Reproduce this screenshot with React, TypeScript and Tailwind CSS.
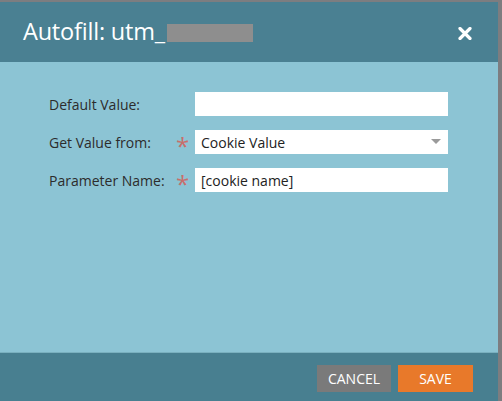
import React from 'react';

const fields = [
  { label: 'Default Value:', required: false, value: '', select: false },
  { label: 'Get Value from:', required: true, value: 'Cookie Value', select: true },
  { label: 'Parameter Name:', required: true, value: '[cookie name]', select: false },
];

export default function App() {
  return (
    <div
      className="w-[502px] h-[401px] bg-[#7d7d80] pt-[2px] pr-[4px] overflow-hidden"
      style={{ fontFamily: '"Open Sans", "Noto Sans", sans-serif' }}
    >
      <div className="flex flex-col h-full w-[498px]">
        {/* Header */}
        <div className="h-[60px] bg-[#4a8092] flex items-center justify-between pl-[23px] pr-[26px] shrink-0">
          <div className="flex items-center text-white text-[23.5px] leading-none">
            <span className="tracking-[-0.2px]">Autofill: utm_</span>
            <span className="w-[86px] h-[18px] bg-[#8e8e8e] ml-[2px] mt-[1px]"></span>
          </div>
          <svg width="14" height="13" viewBox="0 0 14 13" className="mt-[2px]">
            <path d="M2 1.5 L12 11.5 M12 1.5 L2 11.5" stroke="white" strokeWidth="3.2" strokeLinecap="round" />
          </svg>
        </div>

        {/* Body */}
        <div className="flex-1 bg-[#8cc4d4] pt-[30px] pl-[49px] flex flex-col gap-[14px]">
          {fields.map((f) => (
            <div key={f.label} className="flex items-center h-[24px]">
              <span className="w-[128px] text-[14px] text-[#2c2c2c]">{f.label}</span>
              <span className="w-[18px] text-[#c86e6b] text-[24px] leading-none mt-[8px] -ml-[1px]">{f.required ? '*' : ''}</span>
              <div className="w-[253px] h-[24px] bg-white flex items-center justify-between pl-[6px] pr-[7px] text-[14px] text-[#222] ml-[1px]">
                <span>{f.value}</span>
                {f.select && (
                  <svg width="10" height="6" viewBox="0 0 10 6">
                    <path d="M0 0 L10 0 L5 5 Z" fill="#9a9a9a" />
                  </svg>
                )}
              </div>
            </div>
          ))}
        </div>

        {/* Footer */}
        <div className="h-[49px] bg-[#487f90] border-t border-[#7ab0bf] flex items-center justify-end gap-[7px] pr-[25px] pt-[2px] shrink-0">
          <button className="w-[74px] h-[27px] bg-[#7a7a7a] text-white text-[14px] flex items-center justify-center">
            CANCEL
          </button>
          <button className="w-[75px] h-[27px] bg-[#e8792a] text-white text-[14px] flex items-center justify-center">
            SAVE
          </button>
        </div>
      </div>
    </div>
  );
}
